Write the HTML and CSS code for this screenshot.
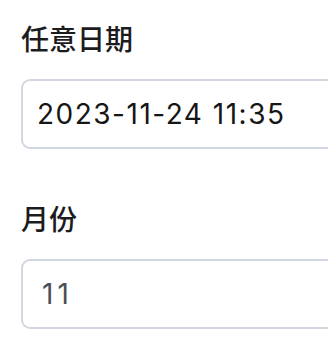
FILE: index.html
```html
<!DOCTYPE html>
<html>
<head>
<meta charset="utf-8">
<link rel="stylesheet" href="styles.css">
</head>
<body>
<div class="form">
  <div class="field">
    <div class="label">任意日期</div>
    <div class="input">2023-11-24 11:35</div>
  </div>
  <div class="field">
    <div class="label">月份</div>
    <div class="input muted">11</div>
  </div>
</div>
</body>
</html>
```
FILE: styles.css
```css
html, body {
  margin: 0;
  padding: 0;
  background: #ffffff;
  overflow: hidden;
}
.form {
  display: flex;
  flex-direction: column;
  gap: 51px;
  padding: 20px 0 0 21px;
  font-family: Inter, "Noto Sans CJK SC", sans-serif;
}
.field {
  display: flex;
  flex-direction: column;
  gap: 19px;
}
.label {
  font-size: 28px;
  line-height: 40px;
  font-weight: 500;
  color: #1c1c1e;
}
.input {
  box-sizing: border-box;
  width: 307px;
  height: 70px;
  border: 2px solid #d3d7e2;
  border-right: none;
  border-radius: 9px 0 0 9px;
  padding: 0 14px;
  display: flex;
  align-items: center;
  white-space: nowrap;
  font-size: 28px;
  font-weight: 400;
  letter-spacing: 1.5px;
  color: #161616;
}
.muted {
  padding-left: 19px;
  letter-spacing: 4px;
  color: #4b5058;
}
```
